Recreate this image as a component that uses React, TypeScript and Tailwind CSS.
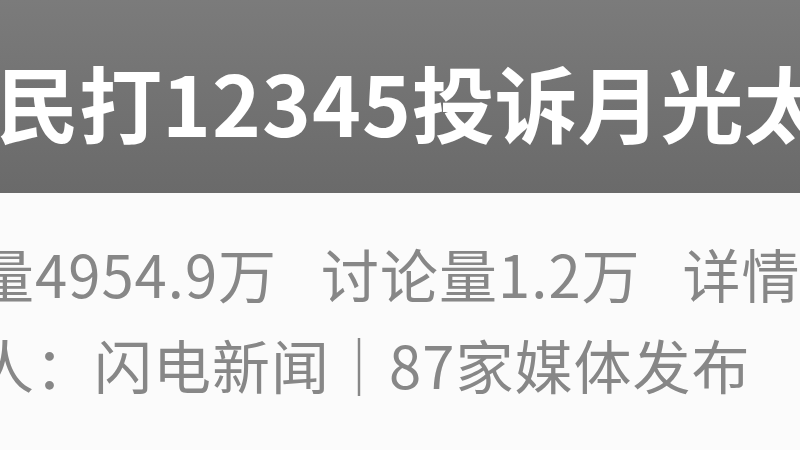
export default function App() {
  const font = { fontFamily: '"Noto Sans CJK SC", "Noto Sans", sans-serif' };
  return (
    <div className="w-[800px] h-[450px] overflow-hidden bg-[#fbfbfb]" style={font}>
      <div className="h-[193px] flex items-center pt-[10px] bg-gradient-to-b from-[#7b7b7b] to-[#6a6a6a] overflow-hidden">
        <div className="ml-[-4px] whitespace-nowrap text-[83px] leading-none font-semibold text-white">
          民打<span className="tracking-[1px]">12345</span>投诉月光太阳
        </div>
      </div>
      <div className="pt-[51px] flex flex-col gap-[33px] text-[#878787] text-[58px] leading-none whitespace-nowrap tracking-[1px]">
        <div className="flex ml-[-24px]">
          <span>量4954.9万</span>
          <span className="ml-[44px]">讨论量1.2万</span>
          <span className="ml-[42px]">详情</span>
        </div>
        <div className="flex ml-[-24px]">
          <span>人：闪电新闻｜87家媒体发布</span>
        </div>
      </div>
    </div>
  );
}
